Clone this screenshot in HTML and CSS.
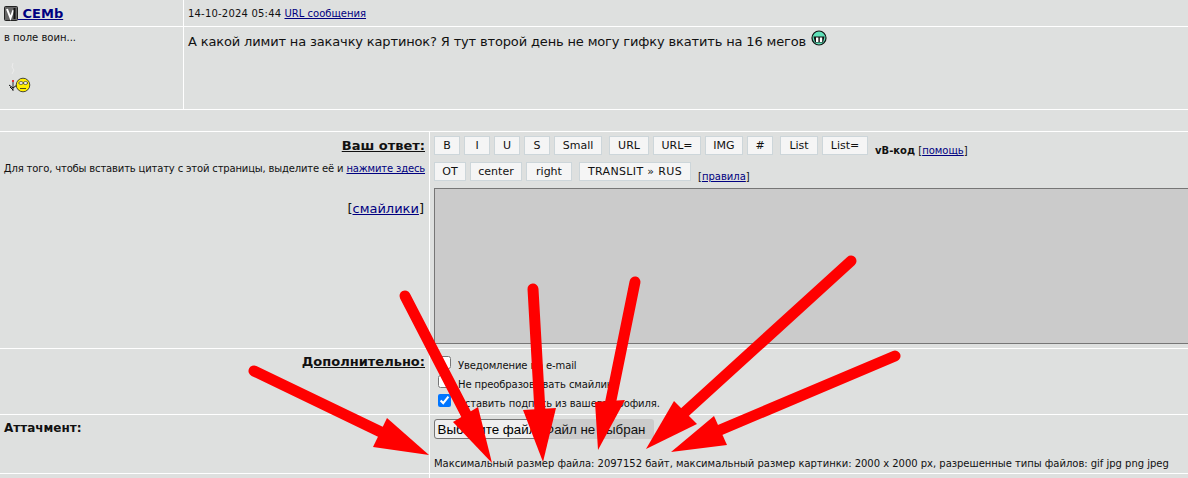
FILE: index.html
```html
<!DOCTYPE html>
<html lang="en">
<head>
    <meta charset="UTF-8">
    <title>Ответ в теме</title>
    <link rel="stylesheet" href="styles.css">
</head>
<body>
    <div class="forum">
        <div class="post-head">
            <div class="author">
                <svg class="avatar" width="14" height="15" viewBox="0 0 14 15">
                    <rect x="0.5" y="0.5" width="13" height="14" rx="1" fill="#666" stroke="#222"/>
                    <path d="M3 3 L6.5 12 L9.5 4" fill="none" stroke="#fff" stroke-width="2"/>
                    <path d="M10.5 2 V13" stroke="#111" stroke-width="2"/>
                </svg>
                <a href="#" class="author-link">&nbsp;CEMb</a>
            </div>
            <div class="post-meta"><span class="post-date">14-10-2024 05:44</span> <a href="#">URL сообщения</a></div>
        </div>
        <div class="post-body">
            <div class="author-info">
                <div>в поле воин...</div>
                <svg class="smoker" width="28" height="32" viewBox="0 0 28 32">
                    <path d="M5 2 L4 6 L6 9 L4 13" fill="none" stroke="#ececec" stroke-width="1"/>
                    <rect x="4" y="19" width="2" height="2" fill="#d33"/>
                    <rect x="4" y="21" width="2" height="9" fill="#888"/>
                    <path d="M1 24 L5 27 L9 24 M2 26 L5 29" fill="none" stroke="#111" stroke-width="1"/>
                    <circle cx="15" cy="24" r="6.8" fill="#ffee00" stroke="#222" stroke-width="0.8"/>
                    <ellipse cx="13" cy="22" rx="2.2" ry="1.4" fill="#fff" stroke="#222" stroke-width="0.7"/>
                    <ellipse cx="17.5" cy="22" rx="2.2" ry="1.4" fill="#fff" stroke="#222" stroke-width="0.7"/>
                    <path d="M12 27.5 H18" stroke="#222" stroke-width="0.8"/>
                </svg>
            </div>
            <div class="post-text">
                А какой лимит на закачку картинок? Я тут второй день не могу гифку вкатить на 16 мегов
                <svg class="grin" width="16" height="16" viewBox="0 0 16 16">
                    <circle cx="8" cy="8" r="7" fill="#5fe0b8" stroke="#111" stroke-width="1.2"/>
                    <path d="M2.5 6.5 H13.5 L12 12.5 H4 Z" fill="#111"/>
                    <rect x="5" y="7.5" width="2.4" height="4.5" fill="#fff"/>
                    <rect x="8.8" y="7.5" width="2.4" height="4.5" fill="#fff"/>
                </svg>
            </div>
        </div>
        <div class="spacer"></div>

        <div class="form-row reply-row">
            <div class="form-label">
                <div class="label-title">Ваш ответ:</div>
                <div class="quote-hint">Для того, чтобы вставить цитату с этой страницы, выделите её и <a href="#">нажмите здесь</a></div>
                <div class="smilies">[<a href="#">смайлики</a>]</div>
            </div>
            <div class="form-field">
                <div class="toolbar">
                    <div class="btn-group">
                        <button class="code-btn btn-b">B</button>
                        <button class="code-btn btn-b">I</button>
                        <button class="code-btn btn-b">U</button>
                        <button class="code-btn btn-b">S</button>
                        <button class="code-btn btn-small">Small</button>
                    </div>
                    <div class="btn-group">
                        <button class="code-btn btn-link">URL</button>
                        <button class="code-btn btn-small">URL=</button>
                        <button class="code-btn btn-url">IMG</button>
                        <button class="code-btn btn-b">#</button>
                    </div>
                    <div class="btn-group">
                        <button class="code-btn btn-url">List</button>
                        <button class="code-btn btn-list">List=</button>
                    </div>
                    <span class="toolbar-note"><b>vB-код</b> [<a href="#">помощь</a>]</span>
                </div>
                <div class="toolbar">
                    <div class="btn-group">
                        <button class="code-btn btn-ot">OT</button>
                        <button class="code-btn btn-center">center</button>
                        <button class="code-btn btn-right">right</button>
                    </div>
                    <div class="btn-group">
                        <button class="code-btn btn-translit">TRANSLIT » RUS</button>
                    </div>
                    <span class="toolbar-note">[<a href="#">правила</a>]</span>
                </div>
                <div class="message-box"></div>
            </div>
        </div>

        <div class="form-row options-row">
            <div class="form-label">
                <div class="label-title">Дополнительно:</div>
            </div>
            <div class="form-field options">
                <label class="option"><input type="checkbox"> <span>Уведомление по e-mail</span></label>
                <label class="option"><input type="checkbox"> <span>Не преобразовывать смайлики</span></label>
                <label class="option"><input type="checkbox" checked> <span>Вставить подпись из вашего профиля.</span></label>
            </div>
        </div>

        <div class="form-row attach-row">
            <div class="form-label attach-label">Аттачмент:</div>
            <div class="form-field">
                <div class="file-input">
                    <button class="file-btn">Выберите файл</button>
                    <span>Файл не выбран</span>
                </div>
                <div class="file-limits">Максимальный размер файла: 2097152 байт, максимальный размер картинки: 2000 x 2000 px, разрешенные типы файлов: gif jpg png jpeg</div>
            </div>
        </div>
        <div class="form-row last-row">
            <div class="form-label"></div>
            <div></div>
        </div>
    </div>

    <!-- red arrows drawn over the screenshot -->
    <svg class="arrows" width="1188" height="478" viewBox="0 0 1188 478">
        <g fill="#ff0000" stroke="#ff0000" stroke-width="11" stroke-linecap="round">
            <line x1="254" y1="371" x2="385" y2="434"/>
            <line x1="405" y1="296" x2="468" y2="418"/>
            <line x1="533" y1="289" x2="540" y2="412"/>
            <line x1="635" y1="282" x2="610" y2="405"/>
            <line x1="851" y1="261" x2="685" y2="412"/>
            <line x1="895" y1="356" x2="720" y2="430"/>
        </g>
        <g fill="#ff0000">
            <polygon points="429,455 387,418 373,447"/>
            <polygon points="492,463 453,422 478,407"/>
            <polygon points="543,462 523,410 556,408"/>
            <polygon points="598,450 595,402 625,400"/>
            <polygon points="646,449 674,401 697,424"/>
            <polygon points="671,452 714,416 727,445"/>
        </g>
    </svg>
</body>
</html>
```

FILE: styles.css
```css
html, body {
    margin: 0;
    padding: 0;
    height: 478px;
    overflow: hidden;
}

body {
    background-color: #dee0df;
    color: #111;
    font-family: "DejaVu Sans", Verdana, sans-serif;
    font-size: 10px;
    position: relative;
}

a {
    color: #000080;
    text-decoration: underline;
}

.post-head {
    display: grid;
    grid-template-columns: 184px 1fr;
    height: 26px;
    border-bottom: 1px solid #fff;
}

.author {
    display: flex;
    align-items: center;
    padding-left: 4px;
    font-size: 13px;
    font-weight: bold;
    border-right: 1px solid #fff;
}

.post-meta {
    padding: 8px 0 0 4px;
}

.post-date {
    letter-spacing: 0.2px;
}

.post-body {
    display: grid;
    grid-template-columns: 184px 1fr;
    height: 82px;
    border-bottom: 1px solid #fff;
}

.author-info {
    padding: 5px 0 0 4px;
    border-right: 1px solid #fff;
}

.smoker {
    display: block;
    margin: 18px 0 0 4px;
}

.post-text {
    padding: 3px 0 0 4px;
    font-size: 13px;
    letter-spacing: -0.15px;
}

.grin {
    vertical-align: 0;
    margin-left: 1px;
}

.spacer {
    height: 21px;
    border-bottom: 1px solid #fff;
}

.form-row {
    display: grid;
    grid-template-columns: 430px 1fr;
    border-bottom: 1px solid #fff;
}

.form-label {
    border-right: 1px solid #fff;
    text-align: right;
    padding: 5px 4px 0 0;
}

.label-title {
    font-size: 13px;
    font-weight: bold;
    text-decoration: underline;
}

.quote-hint {
    margin-top: 10px;
    white-space: nowrap;
    letter-spacing: -0.16px;
}

.smilies {
    margin-top: 27px;
    font-size: 13px;
    padding-right: 1px;
}

.reply-row {
    height: 216px;
}

.reply-row .form-label {
    padding-top: 6px;
}

.reply-row .form-field {
    padding-top: 4px;
}

.form-field {
    padding-left: 4px;
    min-width: 0;
}

.toolbar {
    display: flex;
    align-items: flex-start;
    gap: 7px;
    height: 26px;
}

.btn-group {
    display: flex;
    gap: 4px;
}

.code-btn {
    height: 19px;
    padding: 0;
    font-family: "DejaVu Sans", Verdana, sans-serif;
    font-size: 11px;
    color: #111;
    background-color: #f5f5f5;
    border: 1px solid #cdd6da;
    border-radius: 0;
}

.btn-b { width: 26px; }
.btn-small { width: 48px; }
.btn-url { width: 38px; }
.btn-link { width: 40px; }
.btn-list { width: 46px; }
.btn-ot { width: 32px; }
.btn-center { width: 52px; }
.btn-right { width: 46px; }
.btn-translit { width: 112px; letter-spacing: 0.35px; }

.toolbar-note {
    margin-top: 9px;
}

.message-box {
    height: 156px;
    box-sizing: border-box;
    background-color: #cbcbcb;
    border: 1px solid #767676;
    border-right: none;
}

.options-row {
    height: 65px;
}

.options {
    display: flex;
    flex-direction: column;
    padding: 7px 0 0 8px;
    gap: 4px;
}

.option {
    display: flex;
    align-items: flex-start;
    height: 15px;
    gap: 7px;
    letter-spacing: -0.1px;
}

.option span {
    margin-top: 4px;
    line-height: 12px;
}

.option input {
    margin: 0;
    width: 13px;
    height: 13px;
}

.attach-row {
    height: 58px;
}

.attach-label {
    text-align: left;
    padding: 6px 0 0 4px;
    font-size: 12px;
    font-weight: bold;
}

.file-input {
    display: flex;
    align-items: center;
    width: 220px;
    height: 20px;
    margin-top: 4px;
    gap: 4px;
    background-color: #cbcbcb;
    border-radius: 3px;
    font-family: "Liberation Sans", Arial, sans-serif;
    font-size: 13.33px;
    white-space: nowrap;
}

.file-btn {
    height: 20px;
    width: 106px;
    padding: 0;
    font-family: "Liberation Sans", Arial, sans-serif;
    font-size: 13.33px;
    color: #000;
    background-color: #efefef;
    border: 1px solid #767676;
    border-radius: 3px;
}

.file-limits {
    margin-top: 19px;
    white-space: nowrap;
    letter-spacing: -0.02px;
}

.last-row {
    height: 4px;
    border-bottom: none;
}

.arrows {
    position: absolute;
    top: 0;
    left: 0;
}
```
